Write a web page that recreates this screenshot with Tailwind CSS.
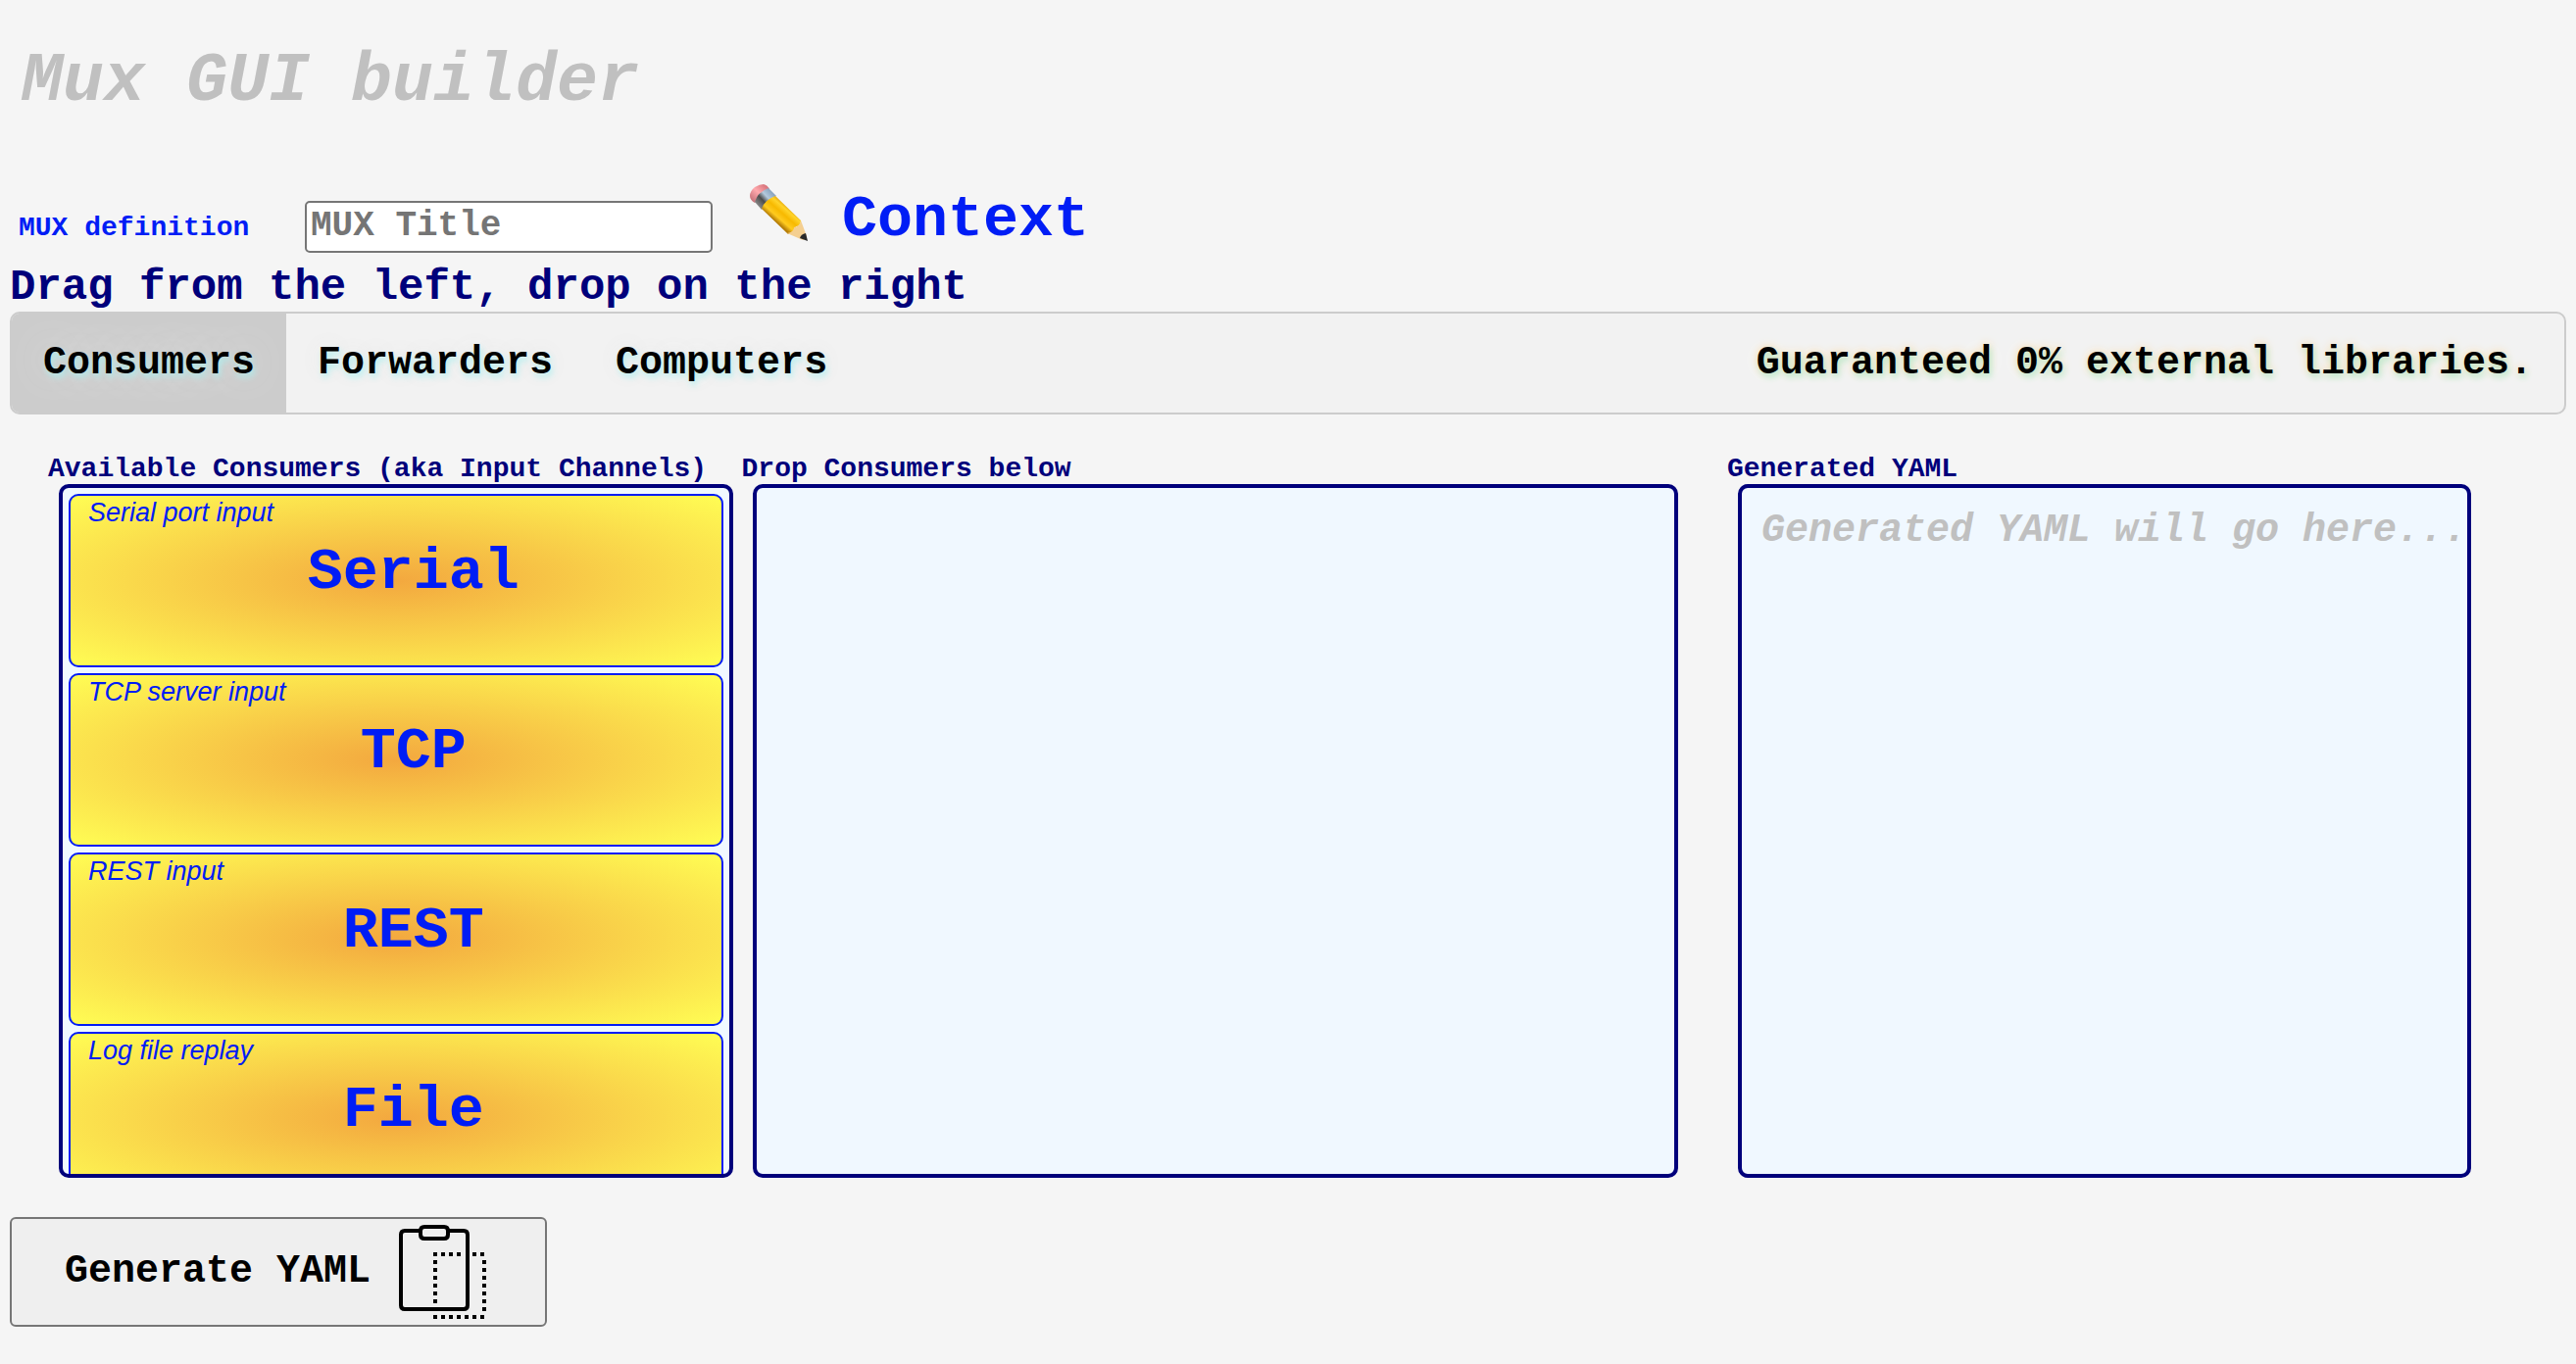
<!DOCTYPE html>
<html lang="en">
<head>
<meta charset="utf-8">
<title>Mux GUI builder</title>
<script src="https://cdn.jsdelivr.net/npm/@tailwindcss/browser@4"></script>
</head>
<body class="min-h-screen bg-[#f5f5f5] px-[10px] pb-9 font-['Liberation_Mono',monospace] font-bold text-[#00007b]">
  <header class="px-3 pt-11">
    <h1 class="text-[70px] leading-20 font-bold italic text-[#c0c0c0]">Mux GUI builder</h1>
  </header>

  <main>
    <div class="mt-14 flex items-baseline pl-[9px] text-[#001df5]">
      <label for="mux-title" class="w-[292px] text-[28px]">MUX definition</label>
      <input id="mux-title" type="text" placeholder="MUX Title" class="h-[53px] w-[416px] rounded-[5px] border-2 border-[#767676] bg-white px-1 text-[36px] font-bold text-black placeholder:text-[#757575]">
      <button type="button" class="ml-[38px] flex items-baseline gap-[34px] text-[60px] leading-[84px] font-bold">
        <svg class="h-[60px] w-[60px] translate-y-2" viewBox="0 0 60 60" aria-hidden="true">
          <defs>
            <linearGradient id="wood" gradientUnits="userSpaceOnUse" x1="36" y1="18" x2="22" y2="34">
              <stop offset="0" stop-color="#d99300"/><stop offset=".25" stop-color="#ffd42a"/><stop offset=".5" stop-color="#f7b900"/><stop offset=".78" stop-color="#ffcb1f"/><stop offset="1" stop-color="#b67e08"/>
            </linearGradient>
            <linearGradient id="metal" gradientUnits="userSpaceOnUse" x1="25" y1="8" x2="9" y2="23">
              <stop offset="0" stop-color="#7f9bb8"/><stop offset=".4" stop-color="#b4c9dd"/><stop offset=".65" stop-color="#4b4b4b"/><stop offset="1" stop-color="#8a8a8a"/>
            </linearGradient>
            <linearGradient id="rubber" x1="1" y1="0" x2="0" y2="1">
              <stop offset="0" stop-color="#c9626b"/><stop offset=".5" stop-color="#ffa9ad"/><stop offset="1" stop-color="#b5636b"/>
            </linearGradient>
          </defs>
          <path d="M0 12Q0 7 5 3Q10 0 14 0Q18 1 20 5L5 19Q0 16 0 12Z" fill="url(#rubber)"/>
          <path d="M19 4L27 12Q17 16 12 26L5 18Q8 8 19 4Z" fill="url(#metal)"/>
          <path d="M26 12L52 37Q52 43 47 43Q47 49 39 51L12 25Q15 16 26 12Z" fill="url(#wood)"/>
          <path d="M52 37L58 53Q58 56 54 57L38 50Q45 49 45 44Q51 43 52 37Z" fill="#f4cf91"/>
          <path d="M57 50L59 58L51 55Q52 51 57 50Z" fill="#292929"/>
        </svg>
        Context
      </button>
    </div>

    <h2 class="mt-0.5 text-[44px] leading-[50px] font-bold">Drag from the left, drop on the right</h2>

    <nav class="flex h-[105px] overflow-hidden rounded-[10px] border-2 border-[#ccc] bg-[#f2f2f2] text-[40px] text-black">
      <button type="button" class="bg-[#ccc] px-8 [text-shadow:2px_4px_6px_#b0ecec,0_0_40px_#e4e4e4]">Consumers</button>
      <button type="button" class="px-8 [text-shadow:2px_4px_6px_#b8f0f0,0_0_20px_#e4e4e4,0_0_40px_#fff]">Forwarders</button>
      <button type="button" class="px-8 [text-shadow:2px_4px_6px_#b8f0f0,0_0_20px_#e4e4e4,0_0_40px_#fff]">Computers</button>
      <p class="ml-auto self-center px-8 [text-shadow:2px_4px_6px_#b8ecd4,0_0_10px_#ffd8a0,0_0_40px_#fff]">Guaranteed 0% external libraries.</p>
    </nav>

    <div class="mt-[41px] grid grid-cols-[708fr_1006fr_758fr] pr-[97px] pl-[39px] text-[28px] leading-[30px]">
      <section>
        <h3 class="whitespace-nowrap">Available Consumers (aka Input Channels)</h3>
        <ul class="mr-[9px] ml-[11px] flex h-[708px] flex-col gap-1.5 overflow-hidden rounded-[10px] border-4 border-[#00007b] bg-[#f0f8ff] p-1.5 text-[#001df5]">
          <li draggable="true" class="h-[177px] shrink-0 rounded-[10px] border-2 border-[#001df5] bg-[radial-gradient(#f3a83f,#fffd54)]">
            <p class="pl-[18px] font-['Liberation_Sans',sans-serif] text-[27px] leading-[34px] font-normal italic">Serial port input</p>
            <p class="mt-[10px] pl-9 text-center text-[60px] leading-[68px]">Serial</p>
          </li>
          <li draggable="true" class="h-[177px] shrink-0 rounded-[10px] border-2 border-[#001df5] bg-[radial-gradient(#f3a83f,#fffd54)]">
            <p class="pl-[18px] font-['Liberation_Sans',sans-serif] text-[27px] leading-[34px] font-normal italic">TCP server input</p>
            <p class="mt-[10px] pl-9 text-center text-[60px] leading-[68px]">TCP</p>
          </li>
          <li draggable="true" class="h-[177px] shrink-0 rounded-[10px] border-2 border-[#001df5] bg-[radial-gradient(#f3a83f,#fffd54)]">
            <p class="pl-[18px] font-['Liberation_Sans',sans-serif] text-[27px] leading-[34px] font-normal italic">REST input</p>
            <p class="mt-[10px] pl-9 text-center text-[60px] leading-[68px]">REST</p>
          </li>
          <li draggable="true" class="h-[177px] shrink-0 rounded-[10px] border-2 border-[#001df5] bg-[radial-gradient(#f3a83f,#fffd54)]">
            <p class="pl-[18px] font-['Liberation_Sans',sans-serif] text-[27px] leading-[34px] font-normal italic">Log file replay</p>
            <p class="mt-[10px] pl-9 text-center text-[60px] leading-[68px]">File</p>
          </li>
        </ul>
      </section>
      <section>
        <h3 class="whitespace-nowrap">Drop Consumers below</h3>
        <div class="mr-[50px] ml-[11px] h-[708px] rounded-[10px] border-4 border-[#00007b] bg-[#f0f8ff]"></div>
      </section>
      <section>
        <h3 class="whitespace-nowrap">Generated YAML</h3>
        <div class="ml-[11px] h-[708px] overflow-hidden rounded-[10px] border-4 border-[#00007b] bg-[#f0f8ff] pt-[22px] pl-5">
          <p class="text-[40px] leading-11 whitespace-nowrap italic text-[#c0c0c0]">Generated YAML will go here...</p>
        </div>
      </section>
    </div>

    <button type="button" class="mt-10 flex h-28 items-center gap-6 rounded-md border-2 border-[#767676] bg-[#efefef] px-[54px] text-[40px] font-bold text-black">
      Generate YAML
      <svg class="h-[100px] w-[100px]" viewBox="0 0 100 100" fill="none" stroke="#000" aria-hidden="true">
        <path d="M26 8H11Q7 8 7 12V84Q7 88 11 88H71Q75 88 75 84V12Q75 8 71 8H56" stroke-width="4"/>
        <path d="M31 4H51Q55 4 55 8V12Q55 16 51 16H31Q27 16 27 12V8Q27 4 31 4Z" stroke-width="4"/>
        <path d="M40 32H68M80 32H94M40 96H94" stroke-width="4" stroke-dasharray="4 4"/>
        <path d="M42 38V84M92 38V92" stroke-width="4" stroke-dasharray="4 4"/>
      </svg>
    </button>
  </main>
</body>
</html>
